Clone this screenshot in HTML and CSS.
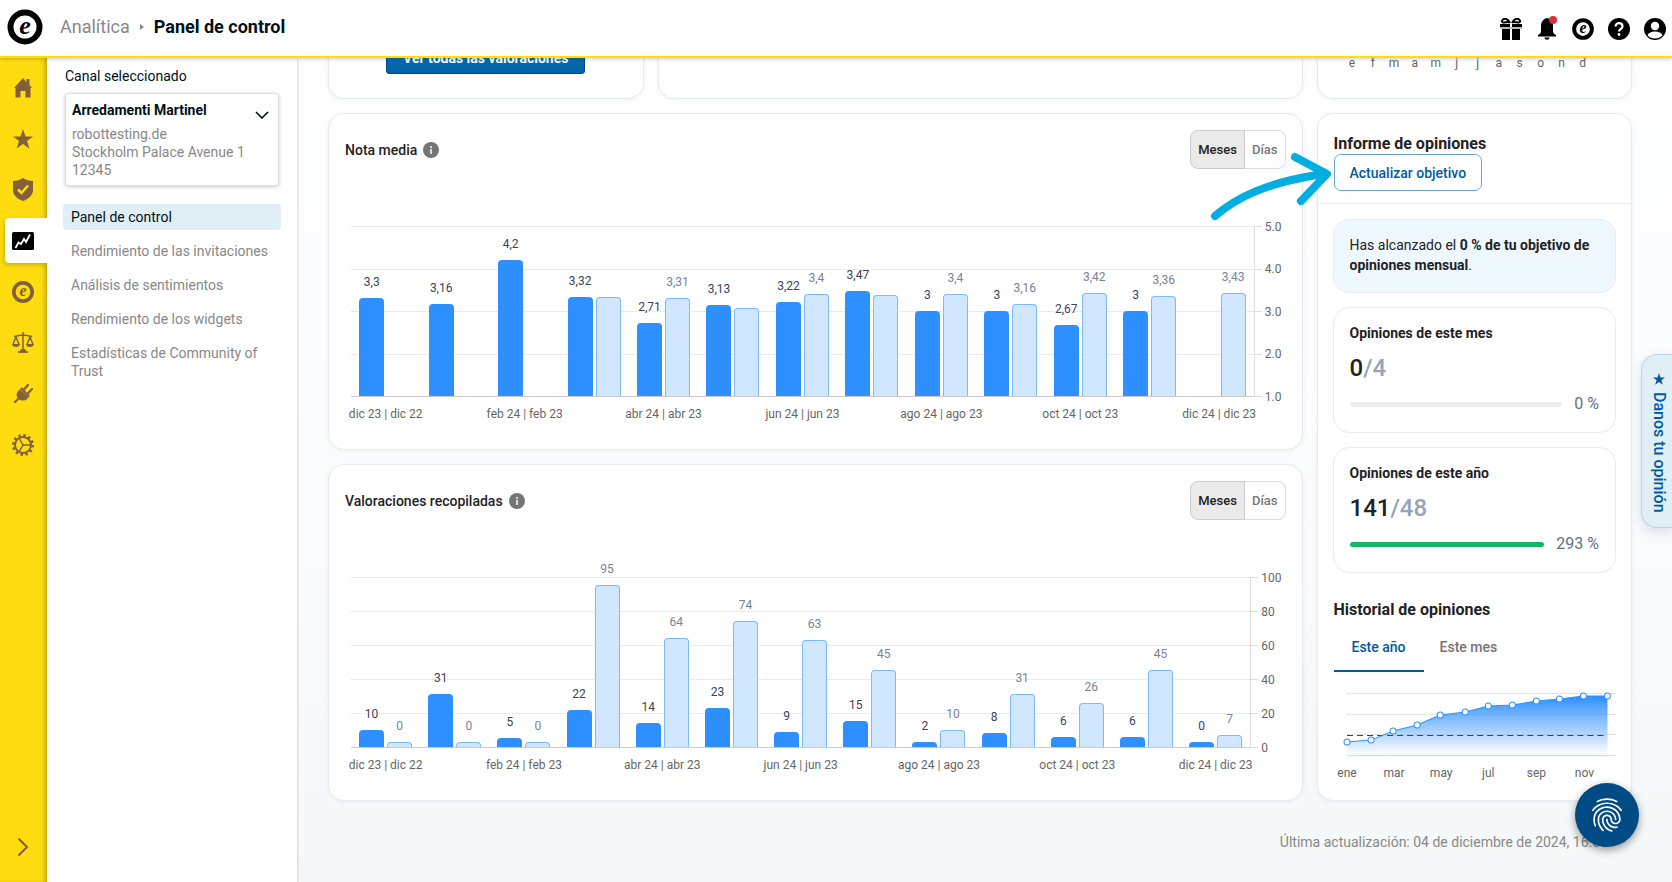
FILE: index.html
```html
<!DOCTYPE html>
<html lang="es">
<head>
    <meta charset="UTF-8">
    <meta name="viewport" content="width=device-width, initial-scale=1.0">
    <title>Panel de control</title>
    <link rel="stylesheet" href="styles.css">
</head>
<body>
    <header class="topbar">
        <a href="#" class="logo" aria-label="Inicio">
            <svg width="36" height="36" viewBox="0 0 36 36"><circle cx="18" cy="18" r="14.5" fill="#fff" stroke="#000" stroke-width="6"/><text x="18" y="25" class="e-mark" font-size="26">e</text></svg>
        </a>
        <nav class="crumbs">
            <a href="#">Analítica</a>
            <svg width="6" height="6" viewBox="0 0 6 6"><path d="M1 0l4 3-4 3z" fill="#888"/></svg>
            <h1>Panel de control</h1>
        </nav>
        <div class="top-icons">
            <button aria-label="Regalos">
                <svg width="22" height="22" viewBox="0 0 22 22"><path d="M0 6h10v3H0zM12 6h10v3H12zM2 11h8v11H2zM12 11h8v11h-8z"/><path d="M0 9.5h22v1H0z" fill="#777"/><path d="M10 5C8 1 5 0 3 1.500S2 5 4 4.500 9 3.500 10 5zM12 5c2-4 5-5 7-3.500S20 5 18 4.500 13 3.500 12 5z" fill="none" stroke="#000" stroke-width="2"/></svg>
            </button>
            <button aria-label="Notificaciones" class="bell">
                <svg width="22" height="22" viewBox="0 0 22 22"><path d="M11 0c-4 1-6 4-6 8v5c0 2-1 3-3 4v1.500h18V17c-2-1-3-2-3-4V8c0-4-2-7-6-8zM8.500 19.500h5c0 3-5 3-5 0z"/></svg>
                <span class="dot"></span>
            </button>
            <button aria-label="Trusted">
                <svg width="22" height="22" viewBox="0 0 36 36"><circle cx="18" cy="18" r="14.500" fill="#fff" stroke="#000" stroke-width="6.500"/><text x="18" y="25" class="e-mark" font-size="26">e</text></svg>
            </button>
            <button aria-label="Ayuda">
                <svg width="22" height="22" viewBox="0 0 22 22"><circle cx="11" cy="11" r="11"/><path d="M7.500 8.500c0-4.500 7-4.500 7 0 0 2.500-3.500 2.500-3.500 5" fill="none" stroke="#fff" stroke-width="2.200"/><circle cx="11" cy="16.500" r="1.400" fill="#fff"/></svg>
            </button>
            <button aria-label="Cuenta">
                <svg width="22" height="22" viewBox="0 0 22 22"><circle cx="11" cy="11" r="11"/><circle cx="11" cy="8" r="4.200" fill="#fff"/><path d="M3.500 17.500c1-3 4-4 7.500-4s6.500 1 7.500 4c-4 4-11 4-15 0z" fill="#fff"/></svg>
            </button>
        </div>
    </header>

    <div class="layout">
        <nav class="rail">
            <a href="#" aria-label="Inicio"><svg width="20" height="20" viewBox="0 0 20 20"><path d="M10 0L1 10h1.500v9.500h5V13h5v6.500h5V10H19l-2.500-3V1h-3v3z"/></svg></a>
            <a href="#" aria-label="Opiniones"><svg width="20" height="20" viewBox="0 0 20 20"><path d="M10 0l2.500 7.500H20l-6 4.500 2.400 7.500L10 15l-6.400 4.500L6 12 0 7.500h7.500z"/></svg></a>
            <a href="#" aria-label="Protección"><svg width="20" height="23" viewBox="0 0 20 23"><path d="M10 0c3 2 6 3 10 3v9c0 6-5 9-10 11C5 21 0 18 0 12V3c4 0 7-1 10-3z"/><path d="M5 11.500l3.500 3.500L15 7.500" fill="none" stroke="#ffdc0f" stroke-width="2.500"/></svg></a>
            <a href="#" aria-label="Analítica" class="current"><svg width="22" height="18" viewBox="0 0 22 18"><rect width="22" height="18" rx="1.500" fill="#000"/><path d="M3.500 16l3-5.500 2.500 1.500 3-5 2 3 4-7.500" fill="none" stroke="#fff" stroke-width="1.800"/></svg></a>
            <a href="#" aria-label="Trusted"><svg width="22" height="22" viewBox="0 0 36 36"><circle cx="18" cy="18" r="15" fill="none" stroke="#82603a" stroke-width="6"/><text x="18" y="25" class="e-mark" font-size="26">e</text></svg></a>
            <a href="#" aria-label="Legal"><svg width="22" height="21" viewBox="0 0 22 21"><g fill="none" stroke="#82603a" stroke-width="1.500"><path d="M11 0v19M2 4.500c3 0 5-1.500 9-1.500s6 1.500 9 1.500M6 20h10"/><path d="M4 5L1 12.500M4 5l3 7.500M18 5l-3 7.500M18 5l3 7.500"/></g><path d="M0 12h8c0 4-8 4-8 0zM14 12h8c0 4-8 4-8 0zM9 17h4l2 3.500H7z"/></svg></a>
            <a href="#" aria-label="Integraciones"><svg width="20" height="20" viewBox="0 0 20 20"><path d="M7 5l8.500 8.500c-3 4-7 3.500-9.500 2L2 19.500.500 18l4-4C3 11 3.500 8 7 5z"/><path d="M8.500 4.500L15.500 12M10.500 6l4.500-5M14.500 10l4.500-5" fill="none" stroke="#82603a" stroke-width="2.200" stroke-linecap="round"/></svg></a>
            <a href="#" aria-label="Configuración"><svg width="22" height="22" viewBox="0 0 22 22"><g fill="none" stroke="#82603a"><circle cx="11" cy="11" r="8" stroke-width="2"/><circle cx="11" cy="11" r="9.700" stroke-width="2.600" stroke-dasharray="2.500 2.580"/><path d="M11 11h8M11 11L7 4M11 11l-4 7" stroke-width="1.500"/></g></svg></a>
            <button class="expand" aria-label="Expandir"><svg width="10" height="18" viewBox="0 0 10 18"><path d="M0.500 0.500L9 9l-8.500 8.500" fill="none" stroke="#82603a" stroke-width="2"/></svg></button>
        </nav>

        <aside class="side">
            <div class="side-label">Canal seleccionado</div>
            <button class="channel">
                <span class="channel-head">
                    <span class="channel-name">Arredamenti Martinel</span>
                    <svg width="14" height="8" viewBox="0 0 14 8"><path d="M1 1l6 6 6-6" fill="none" stroke="#00101a" stroke-width="1.600"/></svg>
                </span>
                <span class="channel-text">robottesting.de<br>Stockholm Palace Avenue 1<br>12345</span>
            </button>
            <nav class="side-nav">
                <a href="#" class="active">Panel de control</a>
                <a href="#">Rendimiento de las invitaciones</a>
                <a href="#">Análisis de sentimientos</a>
                <a href="#">Rendimiento de los widgets</a>
                <a href="#">Estadísticas de Community of Trust</a>
            </nav>
        </aside>

        <main class="main">
            <div class="dashboard">
                <section class="card ratings">
                    <button class="primary">Ver todas las valoraciones</button>
                </section>
                <section class="card wide-top"></section>
                <section class="card months">
                    <span>e</span><span>f</span><span>m</span><span>a</span><span>m</span><span>j</span><span>j</span><span>a</span><span>s</span><span>o</span><span>n</span><span>d</span>
                </section>

                <section class="card chart-card">
                    <div class="card-head">
                        <h2>Nota media</h2>
                        <svg class="info" width="16" height="16" viewBox="0 0 16 16"><circle cx="8" cy="8" r="8" fill="#757575"/><path d="M7 4h2v2H7zM7 7h2v5H7z" fill="#ddd"/></svg>
                        <div class="toggle"><button class="on">Meses</button><button>Días</button></div>
                    </div>
                    <div class="chart" id="average"></div>
                </section>

                <section class="card report">
                    <div class="report-head">
                        <h2>Informe de opiniones</h2>
                        <button class="outline">Actualizar objetivo</button>
                    </div>
                    <div class="report-body">
                        <p class="notice">Has alcanzado el <b>0 % de tu objetivo de opiniones mensual</b>.</p>
                        <div class="goal">
                            <h3>Opiniones de este mes</h3>
                            <div class="score">0<span>/4</span></div>
                            <div class="meter"><div class="track"></div><span>0 %</span></div>
                        </div>
                        <div class="goal">
                            <h3>Opiniones de este año</h3>
                            <div class="score">141<span>/48</span></div>
                            <div class="meter"><div class="track full"></div><span>293 %</span></div>
                        </div>
                        <h2 class="history-title">Historial de opiniones</h2>
                        <div class="tabs"><button class="on">Este año</button><button>Este mes</button></div>
                        <svg class="history" viewBox="0 0 283 100">
                            <defs><linearGradient id="fade" x1="0" y1="0" x2="0" y2="1"><stop offset="0" stop-color="#2e90ff"/><stop offset="1" stop-color="#2e90ff" stop-opacity="0"/></linearGradient></defs>
                            <path class="history-grid" d="M14 10.500h260M14 31.500h260M14 51.500h260"/>
                            <path class="history-axis" d="M14 72.500h268M274 10.500h8M274 31.500h8M274 51.500h8"/>
                            <path fill="url(#fade)" d="M14 59L38 57 60 48 84 42 107 32 132 29 155 23 179 22 203 18 226 16 250 13 274 13V72H14z"/>
                            <path class="history-goal" d="M14 52.500h257"/>
                            <path class="history-line" d="M14 59L38 57 60 48 84 42 107 32 132 29 155 23 179 22 203 18 226 16 250 13 274 13"/>
                            <g class="history-dots"><circle cx="14" cy="59" r="3"/><circle cx="38" cy="57" r="3"/><circle cx="60" cy="48" r="3"/><circle cx="84" cy="42" r="3"/><circle cx="107" cy="32" r="3"/><circle cx="132" cy="29" r="3"/><circle cx="155" cy="23" r="3"/><circle cx="179" cy="22" r="3"/><circle cx="203" cy="18" r="3"/><circle cx="226" cy="16" r="3"/><circle cx="250" cy="13" r="3"/><circle cx="274" cy="13" r="3"/></g>
                            <g class="history-labels"><text x="14" y="94">ene</text><text x="61" y="94">mar</text><text x="108" y="94">may</text><text x="155" y="94">jul</text><text x="203" y="94">sep</text><text x="251" y="94">nov</text></g>
                        </svg>
                    </div>
                    <svg class="arrow" width="124" height="74" viewBox="0 0 124 74"><path d="M6 66C28 47 58 33 108 25M86 7l32 17-26 27" fill="none" stroke="#00aee0" stroke-width="8" stroke-linecap="round" stroke-linejoin="round"/></svg>
                </section>

                <section class="card chart-card">
                    <div class="card-head">
                        <h2>Valoraciones recopiladas</h2>
                        <svg class="info" width="16" height="16" viewBox="0 0 16 16"><circle cx="8" cy="8" r="8" fill="#757575"/><path d="M7 4h2v2H7zM7 7h2v5H7z" fill="#ddd"/></svg>
                        <div class="toggle"><button class="on">Meses</button><button>Días</button></div>
                    </div>
                    <div class="chart" id="collected"></div>
                </section>
            </div>
            <p class="updated">Última actualización: 04 de diciembre de 2024, 16.03</p>
        </main>
    </div>

    <button class="feedback"><svg width="12" height="12" viewBox="0 0 20 20"><path d="M10 0l2.500 7.500H20l-6 4.500 2.400 7.500L10 15l-6.400 4.500L6 12 0 7.500h7.500z"/></svg>Danos tu opinión</button>
    <button class="privacy" aria-label="Privacidad">
        <svg width="40" height="40" viewBox="0 0 24 24"><path fill="#fff" d="M17.810 4.470c-.08 0-.16-.02-.23-.06C15.660 3.420 14 3 12.010 3c-1.980 0-3.860.47-5.570 1.410-.24.13-.54.04-.68-.2-.13-.24-.04-.55.2-.68C7.820 2.520 9.860 2 12.010 2c2.130 0 3.990.47 6.030 1.520.25.13.34.43.21.67-.09.18-.26.28-.44.28zM3.500 9.720c-.1 0-.2-.03-.29-.09-.23-.16-.28-.47-.12-.7.99-1.400 2.250-2.500 3.750-3.270C9.980 4.040 14 4.030 17.150 5.650c1.500.77 2.760 1.860 3.750 3.250.16.22.11.54-.12.7-.23.16-.54.11-.7-.12-.9-1.260-2.040-2.250-3.390-2.940-2.870-1.470-6.540-1.470-9.400.01-1.360.7-2.500 1.700-3.400 2.960-.08.14-.23.21-.39.21zm6.250 12.070c-.13 0-.26-.05-.35-.15-.87-.87-1.340-1.430-2.010-2.640-.69-1.230-1.050-2.730-1.050-4.340 0-2.970 2.540-5.390 5.660-5.390s5.660 2.420 5.660 5.390c0 .28-.22.5-.5.5s-.5-.22-.5-.5c0-2.420-2.090-4.390-4.660-4.390-2.570 0-4.660 1.970-4.660 4.390 0 1.440.32 2.770.93 3.850.64 1.150 1.080 1.640 1.850 2.420.19.2.19.51 0 .71-.11.1-.24.15-.37.15zm7.170-1.850c-1.190 0-2.240-.3-3.100-.89-1.490-1.010-2.380-2.650-2.380-4.390 0-.28.22-.5.5-.5s.5.22.5.5c0 1.410.72 2.740 1.940 3.560.71.48 1.540.71 2.540.71.24 0 .64-.03 1.040-.1.27-.05.53.13.58.41.05.27-.13.53-.41.58-.57.11-1.070.12-1.210.12zM14.910 22c-.04 0-.09-.01-.13-.02-1.590-.44-2.630-1.030-3.720-2.100-1.400-1.390-2.170-3.240-2.170-5.220 0-1.620 1.380-2.940 3.080-2.940 1.700 0 3.080 1.320 3.080 2.940 0 1.070.93 1.940 2.080 1.940s2.080-.87 2.080-1.940c0-3.770-3.250-6.830-7.250-6.830-2.840 0-5.440 1.580-6.610 4.030-.39.81-.59 1.760-.59 2.800 0 .78.07 2.010.67 3.610.1.26-.03.55-.29.64-.26.1-.55-.04-.64-.29-.49-1.310-.73-2.610-.73-3.960 0-1.200.23-2.290.68-3.240 1.330-2.790 4.280-4.600 7.510-4.600 4.550 0 8.250 3.510 8.250 7.830 0 1.620-1.380 2.940-3.080 2.940s-3.080-1.320-3.080-2.940c0-1.070-.93-1.940-2.080-1.940s-2.080.87-2.080 1.940c0 1.710.66 3.310 1.870 4.510.95.94 1.860 1.460 3.270 1.850.27.07.42.35.35.61-.05.23-.26.38-.47.38z"/></svg>
    </button>

    <script src="script.js"></script>
</body>
</html>
```

FILE: styles.css
```css
* {
    box-sizing: border-box;
}
body {
    margin: 0;
    height: 100vh;
    overflow: hidden;
    display: flex;
    flex-direction: column;
    font-family: Roboto, "Liberation Sans", sans-serif;
    font-size: 14px;
    line-height: 18px;
    color: #222;
    background: linear-gradient(#fefefe, #fbfcfe 40%, #f4f8f9);
}
h1, h2, h3, p {
    margin: 0;
}
button {
    font: inherit;
    color: inherit;
    background: none;
    border: 0;
    padding: 0;
    cursor: pointer;
}
a {
    color: inherit;
    text-decoration: none;
}
svg {
    display: block;
    flex-shrink: 0;
}

/* top bar */
.topbar {
    display: flex;
    align-items: center;
    height: 58px;
    flex-shrink: 0;
    padding: 0 6px 2px 7px;
    background: #fff;
    border-bottom: 2px solid #ffdc0f;
    box-shadow: 0 1px 4px rgba(0, 0, 0, 0.2);
    position: relative;
    z-index: 3;
}
.e-mark {
    font-family: "Liberation Serif", serif;
    font-style: italic;
    font-weight: bold;
    text-anchor: middle;
}
.crumbs {
    display: flex;
    align-items: center;
    gap: 9px;
    margin-left: 17px;
    font-size: 18px;
    line-height: 24px;
    color: #888;
}
.crumbs h1 {
    font-size: 18px;
    font-weight: 700;
    color: #00101a;
}
.top-icons {
    display: flex;
    gap: 14px;
    margin-left: auto;
    padding-top: 4px;
}
.bell {
    position: relative;
}
.dot {
    position: absolute;
    top: -2px;
    right: 1px;
    width: 8px;
    height: 8px;
    border-radius: 50%;
    background: #d9303a;
}

.layout {
    display: flex;
    flex: 1;
    min-height: 0;
}

/* yellow icon rail */
.rail {
    display: flex;
    flex-direction: column;
    gap: 6px;
    width: 47px;
    padding: 7px 0 13px 5px;
    background: #ffdc0f;
    box-shadow: inset -4px 0 4px -2px rgba(0, 0, 0, 0.25);
    fill: #82603a;
}
.rail a, .expand {
    display: flex;
    align-items: center;
    justify-content: center;
    height: 45px;
    padding-right: 6px;
    border-radius: 4px 0 0 4px;
}
.rail .current {
    background: #fff;
    box-shadow: -1px 2px 4px rgba(0, 0, 0, 0.2);
}
.expand {
    margin-top: auto;
}

/* channel and section menu */
.side {
    width: 250px;
    padding: 9px 16px 0;
    background: #fff;
    box-shadow: 1px 0 2px rgba(0, 0, 0, 0.15);
    color: #00101a;
}
.side-label {
    padding-left: 2px;
}
.channel {
    display: block;
    width: 214px;
    margin: 8px 0 18px 2px;
    padding: 7px 7px 6px 6px;
    border: 1px solid #ddd;
    border-radius: 3px;
    box-shadow: 0 1px 4px rgba(0, 0, 0, 0.2);
    text-align: left;
}
.channel-head {
    display: flex;
    align-items: flex-end;
    justify-content: space-between;
    margin-bottom: 6px;
    padding-right: 2px;
}
.channel-name {
    font-weight: 700;
}
.channel-text {
    color: #888;
}
.side-nav {
    display: flex;
    flex-direction: column;
    gap: 8px;
}
.side-nav a {
    padding: 4px 8px;
    border-radius: 4px;
    color: #888;
}
.side-nav .active {
    background: #e0eff6;
    color: #00101a;
}

/* dashboard */
.main {
    flex: 1;
    min-width: 0;
    overflow: hidden;
    padding: 0 40px 0 31px;
}
.dashboard {
    display: grid;
    grid-template-columns: repeat(4, minmax(0, 1fr));
    grid-template-rows: 160px;
    gap: 14px;
    margin-top: -119px;
}
.card {
    background: #fff;
    border: 1px solid #e7eaf0;
    border-radius: 16px;
    box-shadow: 0 1px 4px rgba(30, 50, 90, 0.06);
}
.ratings {
    display: flex;
    align-items: flex-end;
    justify-content: center;
    padding-bottom: 24px;
}
.primary {
    height: 32px;
    padding: 0 16px;
    border: 1px solid #00477f;
    border-radius: 3px;
    background: linear-gradient(#1478b8, #0061a6);
    color: #fff;
    font-weight: 700;
}
.wide-top {
    grid-column: span 2;
}
.months {
    display: grid;
    grid-template-columns: repeat(12, 1fr);
    align-items: end;
    padding: 0 38px 26px 24px;
    color: #666;
    font-size: 12px;
    text-align: center;
}
.chart-card {
    grid-column: span 3;
    padding: 16px;
}
.card-head {
    display: flex;
    align-items: center;
    margin-bottom: 57px;
}
.card-head h2 {
    font-size: 14px;
    font-weight: 500;
}
.info {
    margin-left: 6px;
}
.toggle {
    display: flex;
    margin-left: auto;
    font-size: 13px;
    font-weight: 500;
    color: #777;
}
.toggle button {
    height: 39px;
    padding: 0 7px;
    border: 1px solid #ddd;
    border-left: 0;
    border-radius: 0 8px 8px 0;
}
.toggle .on {
    border: 1px solid #ccc;
    border-radius: 8px 0 0 8px;
    background: #eaeaea;
    color: #222;
}

/* bar charts */
.chart {
    display: flex;
    padding: 0 4px 0 6px;
    margin-bottom: 12px;
    font-size: 12px;
    line-height: 14px;
}
.plot {
    flex: 1;
    min-width: 0;
    display: grid;
    grid-template-rows: 171px auto;
    row-gap: 10px;
}
.lines, .bars {
    grid-area: 1 / 1;
    display: flex;
}
.lines {
    flex-direction: column;
    justify-content: space-between;
}
.lines div {
    height: 1px;
    background: repeating-linear-gradient(90deg, #e4e4e4 0 3px, transparent 3px 4px);
}
.lines div:last-child {
    background: #ccc;
}
.group {
    flex: 1;
    display: flex;
    align-items: flex-end;
    justify-content: center;
    gap: 3px;
    height: 170px;
}
.bar {
    display: flex;
    flex-direction: column;
    align-items: center;
    justify-content: flex-end;
    width: 25px;
    height: 100%;
    color: #3b4259;
}
.bar span {
    margin-bottom: 9px;
    text-shadow: 0 0 2px #fff, 0 0 2px #fff, 0 0 2px #fff;
}
.bar div {
    width: 100%;
    min-height: 5px;
    flex-shrink: 0;
    border-radius: 4px 4px 0 0;
    background: #2e90ff;
}
.bar.last {
    color: #7a819a;
}
.bar.last div {
    border: 1px solid #7cb9ff;
    border-bottom: 0;
    background: #d1e7ff;
}
.cats {
    display: flex;
    color: #666;
}
.cats div {
    flex: 1;
    display: flex;
    justify-content: center;
    width: 0;
    white-space: nowrap;
}
.axis {
    display: flex;
    flex-direction: column;
    justify-content: space-between;
    height: 171px;
    border-left: 1px solid #ddd;
    color: #666;
}
.axis div {
    display: flex;
    align-items: center;
    gap: 3px;
    height: 1px;
}
.axis div::before {
    content: "";
    width: 7px;
    height: 1px;
    background: #ddd;
}

/* goal report */
.report {
    grid-column: 4;
    grid-row: 2 / 4;
    position: relative;
}
.report h2 {
    font-size: 16px;
    line-height: 20px;
    font-weight: 700;
}
.report-head {
    padding: 20px 16px 12px;
    border-bottom: 1px solid #e7eaf0;
}
.outline {
    display: block;
    height: 37px;
    padding: 0 15px;
    border: 1px solid #6aa3d5;
    border-radius: 7px;
    color: #005a9e;
    font-weight: 500;
}
.report-body {
    padding: 15px 15px 0;
}
.notice, .goal {
    border: 1px solid #e9ebef;
    border-radius: 16px;
    padding: 16px;
    margin-bottom: 14px;
}
.notice {
    padding: 15px 16px 17px;
    background: #f0f8ff;
    line-height: 20px;
}
.notice b, .goal h3 {
    font-weight: 700;
}
.goal {
    padding-bottom: 18px;
}
.goal h3 {
    font-size: 14px;
}
.score {
    margin: 10px 0;
    font-size: 24px;
    line-height: 32px;
    font-weight: 500;
}
.score span {
    color: #98a2b8;
}
.meter {
    display: flex;
    align-items: center;
    gap: 12px;
    font-size: 16px;
    line-height: 20px;
    color: #667085;
}
.track {
    flex: 1;
    height: 5px;
    border-radius: 3px;
    background: #eee;
}
.track.full {
    background: #12b76a;
}
.report .history-title {
    margin: 27px 0 0 1px;
}
.tabs {
    display: flex;
    margin-left: 1px;
    color: #757575;
    font-weight: 500;
}
.tabs button {
    height: 52px;
    padding: 4px 16px 0;
    border-bottom: 2px solid transparent;
}
.tabs .on {
    border-color: #005a9e;
    color: #005a9e;
    padding: 4px 18px 0;
}
.history {
    width: 100%;
    margin-top: 11px;
    overflow: visible;
}
.history-grid, .history-axis {
    stroke: #ddd;
}
.history-grid {
    stroke-dasharray: 3 1;
}
.history-goal {
    stroke: #444;
    stroke-dasharray: 6 4;
}
.history-line {
    fill: none;
    stroke: #2e90ff;
}
.history-dots {
    fill: #fff;
    stroke: #2e90ff;
}
.history-labels {
    font-size: 12px;
    fill: #666;
    text-anchor: middle;
}
.arrow {
    position: absolute;
    top: 36px;
    left: -109px;
}
.updated {
    margin: 32px 24px 0;
    text-align: right;
    color: #888;
}

/* floating buttons */
.feedback {
    position: absolute;
    right: 0;
    top: 354px;
    display: flex;
    align-items: center;
    gap: 7px;
    height: 174px;
    width: 31px;
    padding: 18px 3px 0 7px;
    writing-mode: vertical-rl;
    border: 1px solid #b5d7e8;
    border-right: 0;
    border-radius: 16px 0 0 16px;
    background: #e0eff6;
    box-shadow: 0 4px 12px rgba(30, 60, 110, 0.15);
    color: #005a9e;
    fill: #005a9e;
    font-size: 16px;
    font-weight: 500;
}
.privacy {
    position: absolute;
    right: 33px;
    bottom: 35px;
    display: flex;
    align-items: center;
    justify-content: center;
    width: 64px;
    height: 64px;
    border-radius: 50%;
    background: #004b83;
    box-shadow: 0 3px 8px rgba(0, 0, 0, 0.4);
}
```

FILE: script.js
```js
const months = ['dic 23 | dic 22', '', 'feb 24 | feb 23', '', 'abr 24 | abr 23', '', 'jun 24 | jun 23', '', 'ago 24 | ago 23', '', 'oct 24 | oct 23', '', 'dic 24 | dic 23'];

// each entry: current value, value of the year before
const average = [[3.3], [3.16], [4.2], [3.32, 3.33], [2.71, 3.31], [3.13, 3.07], [3.22, 3.4], [3.47, 3.38], [3, 3.4], [3, 3.16], [2.67, 3.42], [3, 3.36], [null, 3.43]];
const collected = [[10, 0], [31, 0], [5, 0], [22, 95], [14, 64], [23, 74], [9, 63], [15, 45], [2, 10], [8, 31], [6, 26], [6, 45], [0, 7]];

// labels that would run into the bar next to them
const hidden = [3.33, 3.07, 3.38];

function bar(value, min, max, name) {
    if (value == null) {
        return '<div class="bar"></div>';
    }
    const label = hidden.includes(value) ? '' : `<span>${String(value).replace('.', ',')}</span>`;
    const height = Math.round((value - min) / (max - min) * 170);
    return `<div class="bar ${name}">${label}<div style="height: ${height}px"></div></div>`;
}

function drawChart(id, data, min, max, ticks) {
    const lines = ticks.map(() => '<div></div>').join('');
    const groups = data.map(d => `<div class="group">${bar(d[0], min, max, 'now')}${bar(d[1], min, max, 'last')}</div>`).join('');
    const cats = months.map(m => `<div>${m}</div>`).join('');
    const axis = ticks.map(t => `<div>${t}</div>`).join('');
    document.getElementById(id).innerHTML = `
        <div class="plot">
            <div class="lines">${lines}</div>
            <div class="bars">${groups}</div>
            <div class="cats">${cats}</div>
        </div>
        <div class="axis">${axis}</div>`;
}

drawChart('average', average, 1, 5, ['5.0', '4.0', '3.0', '2.0', '1.0']);
drawChart('collected', collected, 0, 100, [100, 80, 60, 40, 20, 0]);
```
